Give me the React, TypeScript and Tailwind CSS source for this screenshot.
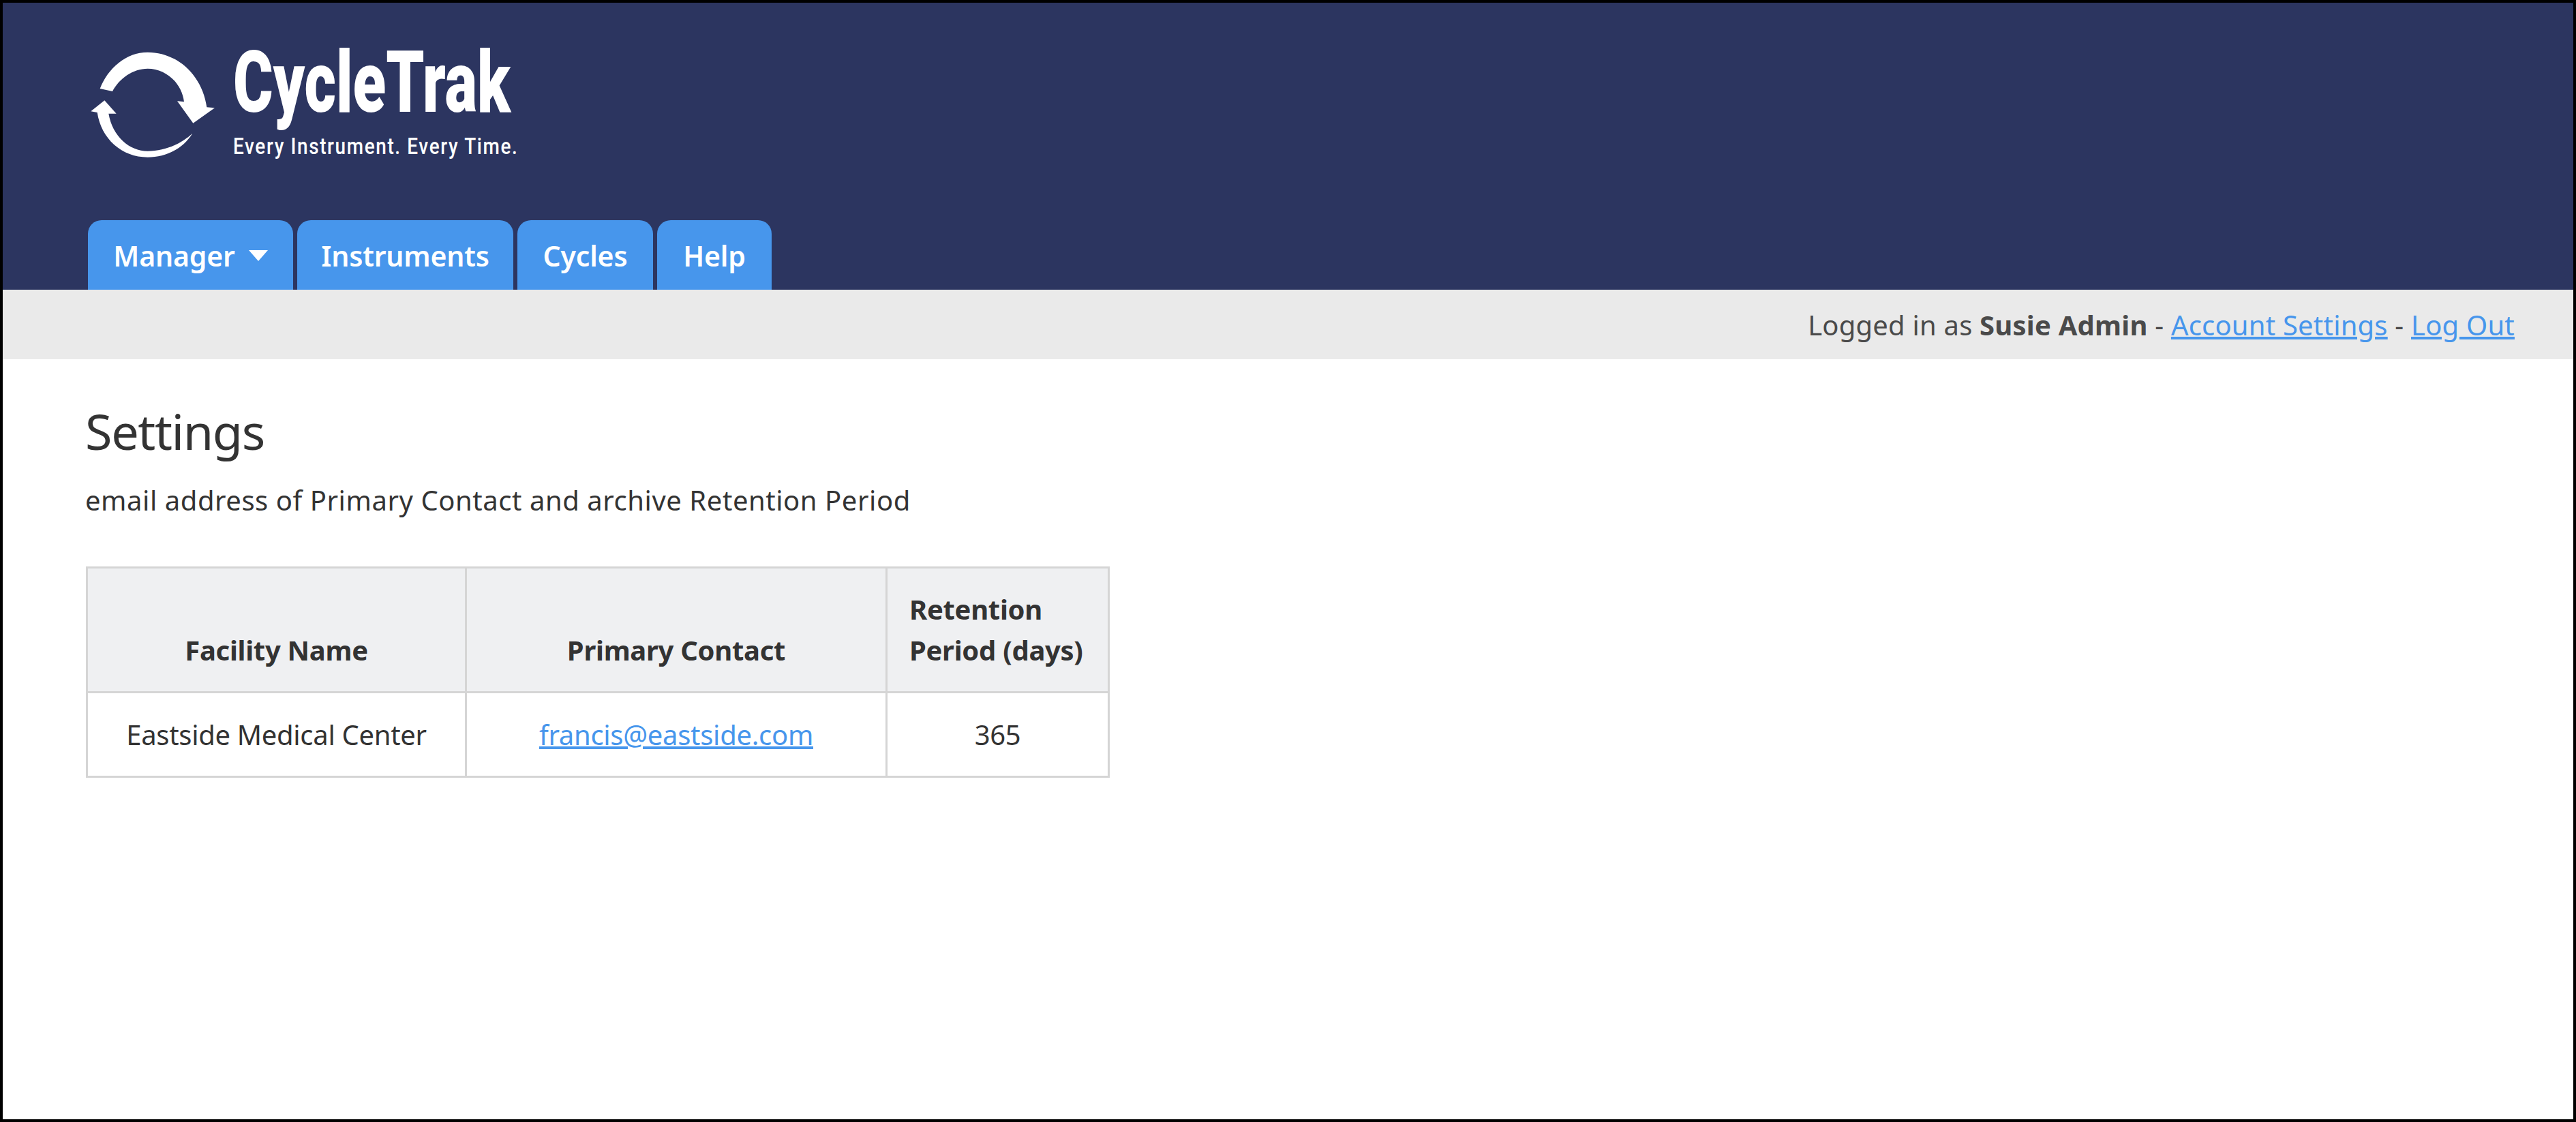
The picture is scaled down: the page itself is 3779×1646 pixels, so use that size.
const Logo = () => {
  return (
    <div className="flex items-start pl-[116px] pt-[46px]">
      <svg width="220" height="200" viewBox="0 0 660 600" className="shrink-0">
        <path
          fill="#fff"
          d="M80 240 C115 150 195 80 290 80 C420 80 530 180 550 322 L585 325 L490 392 L420 295 L450 298 C440 215 370 152 290 152 C225 152 165 195 135 252 Z"
        />
        <path
          fill="#fff"
          d="M100 292 L152 350 L118 350 C135 450 210 515 290 515 C370 515 440 480 487 437 C445 505 370 542 290 542 C175 542 85 460 68 345 L40 340 Z"
        />
      </svg>
      <div className="flex flex-col text-white font-['Roboto',sans-serif] ml-[2px] pt-[8px]">
        <span className="block origin-left scale-x-[0.71] text-[126px] leading-[126px] font-black whitespace-nowrap">
          CycleTrak
        </span>
        <span className="block origin-left scale-x-[0.82] text-[34px] leading-[40px] font-medium tracking-[2px] whitespace-nowrap mt-[10px]">
          Every Instrument. Every Time.
        </span>
      </div>
    </div>
  );
};

const App = () => {
  return (
    <div className="w-full h-[1646px] border-4 border-black bg-white flex flex-col font-['Noto_Sans',sans-serif] text-[40px] leading-[60px] text-[#333]">
      <header className="h-[421px] shrink-0 bg-[#2c3560] flex flex-col">
        <Logo />
        <nav className="mt-auto flex gap-[6px] pl-[125px]">
          <a className="w-[301px] h-[102px] flex items-center justify-center gap-[20px] pt-[2px] bg-[#4796ec] rounded-t-[20px] text-white font-semibold text-[41px] tracking-[-0.2px]">
            Manager
            <span className="w-0 h-0 border-x-[14px] border-x-transparent border-t-[16px] border-t-white" />
          </a>
          <a className="w-[317px] h-[102px] flex items-center justify-center pt-[2px] bg-[#4796ec] rounded-t-[20px] text-white font-semibold text-[41px] tracking-[-0.2px]">
            Instruments
          </a>
          <a className="w-[199px] h-[102px] flex items-center justify-center pt-[2px] bg-[#4796ec] rounded-t-[20px] text-white font-semibold text-[41px] tracking-[-0.2px]">
            Cycles
          </a>
          <a className="w-[168px] h-[102px] flex items-center justify-center pt-[2px] bg-[#4796ec] rounded-t-[20px] text-white font-semibold text-[41px] tracking-[-0.2px]">
            Help
          </a>
        </nav>
      </header>

      <div className="h-[102px] shrink-0 bg-[#eaeaea] flex items-center justify-end pr-[86px] pt-[2px] text-[#4a4a4a] tracking-[0.2px]">
        <span>
          Logged in as <b className="font-bold">Susie Admin</b> -{" "}
          <a className="text-[#4796ec] underline">Account Settings</a> -{" "}
          <a className="text-[#4796ec] underline">Log Out</a>
        </span>
      </div>

      <main className="pl-[121px] pt-[60px]">
        <h1 className="text-[72px] leading-[90px] tracking-[-1.4px]">Settings</h1>
        <p className="mt-[27px] tracking-[0.55px]">
          email address of Primary Contact and archive Retention Period
        </p>

        <table className="mt-[67px] ml-[1px] w-[1499px] table-fixed border-collapse tracking-[-0.3px]">
          <colgroup>
            <col className="w-[556px]" />
            <col className="w-[617px]" />
            <col className="w-[326px]" />
          </colgroup>
          <thead>
            <tr className="bg-[#eff0f2]">
              <th className="border-[3px] border-[#d5d5d5] px-[30px] py-[30px] align-bottom font-bold">
                Facility Name
              </th>
              <th className="border-[3px] border-[#d5d5d5] px-[30px] py-[30px] align-bottom font-bold">
                Primary Contact
              </th>
              <th className="border-[3px] border-[#d5d5d5] pl-[32px] pr-[20px] py-[30px] align-bottom text-left font-bold">
                Retention Period (days)
              </th>
            </tr>
          </thead>
          <tbody>
            <tr className="text-center">
              <td className="border-[3px] border-[#d5d5d5] pt-[31px] pb-[30px]">Eastside Medical Center</td>
              <td className="border-[3px] border-[#d5d5d5] pt-[31px] pb-[30px]">
                <a className="text-[#4796ec] underline">francis@eastside.com</a>
              </td>
              <td className="border-[3px] border-[#d5d5d5] pt-[31px] pb-[30px]">365</td>
            </tr>
          </tbody>
        </table>
      </main>
    </div>
  );
};

export default App;
